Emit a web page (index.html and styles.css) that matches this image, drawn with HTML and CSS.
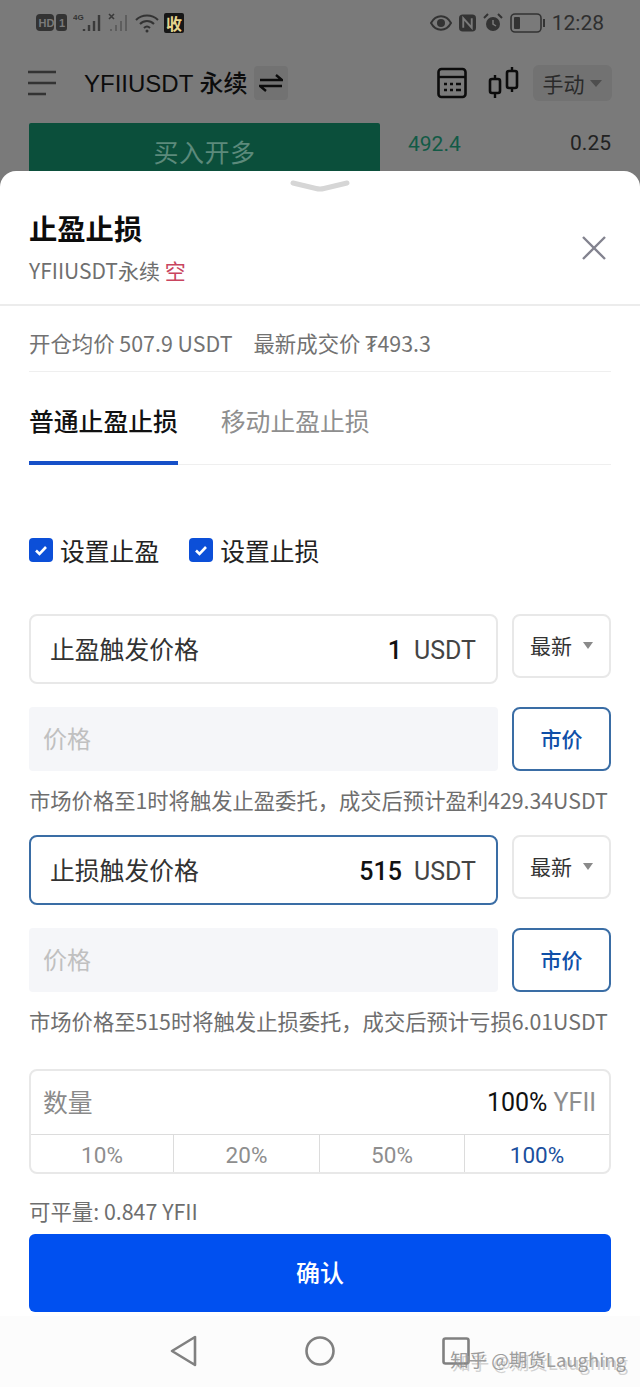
FILE: index.html
```html
<!DOCTYPE html>
<html lang="zh-CN">
<head>
    <meta charset="UTF-8">
    <title>止盈止损</title>
    <link rel="stylesheet" href="styles.css">
</head>
<body>

    <div class="behind">
        <div class="status-bar">
            <div class="status-left">
                <svg width="32" height="18" viewBox="0 0 32 18"><rect x="0" y="0" width="18" height="17" rx="4" fill="#333"/><rect x="20" y="0" width="11" height="17" rx="3" fill="#333"/><text x="2.500" y="13" class="svg-tiny">HD</text><text x="23" y="13" class="svg-tiny">1</text></svg>
                <svg width="30" height="20" viewBox="0 0 30 20"><text x="0" y="7" class="svg-net">4G</text><path d="M11 18v-2M16 18v-6M21 18V8M26 18V2" stroke="#3a3a3a" stroke-width="2.400" fill="none"/></svg>
                <svg width="22" height="20" viewBox="0 0 22 20"><path d="M1 1l5 5M6 1L1 6" stroke="#3a3a3a" stroke-width="1.600"/><path d="M3 18v-2M8 18v-6M13 18V8M18 18V2" stroke="#5e5e5e" stroke-width="2" fill="none"/></svg>
                <svg width="24" height="20" viewBox="0 0 24 20"><path d="M1 7c6-6 16-6 22 0M5 11c4-4 10-4 14 0M9 15c2-2 4-2 6 0" stroke="#333" stroke-width="2" fill="none"/><circle cx="12" cy="18" r="1.500" fill="#333"/></svg>
                <span class="shou">收</span>
            </div>
            <div class="status-right">
                <svg width="22" height="16" viewBox="0 0 22 16"><path d="M1 8c5-9 15-9 20 0-5 9-15 9-20 0z" fill="none" stroke="#333" stroke-width="2"/><circle cx="11" cy="8" r="4" fill="#333"/></svg>
                <svg width="17" height="18" viewBox="0 0 18 18"><rect x="0" y="0" width="18" height="18" rx="4" fill="#333"/><path d="M4.500 14V4l9 10V4" stroke="#7a7a7a" stroke-width="2" fill="none"/></svg>
                <svg width="20" height="20" viewBox="0 0 20 20"><circle cx="10" cy="11" r="7" fill="#333"/><path d="M1 5l4-4M19 5l-4-4" stroke="#333" stroke-width="2" fill="none"/><path d="M10 7v4l3 2" stroke="#7a7a7a" stroke-width="1.500" fill="none"/></svg>
                <svg width="36" height="20" viewBox="0 0 36 20"><rect x="1" y="1" width="30" height="18" rx="4" fill="none" stroke="#333" stroke-width="1.600"/><rect x="4" y="4" width="6" height="12" rx="1" fill="#333"/><rect x="33" y="6" width="2" height="8" fill="#333"/></svg>
                <span class="clock">12:28</span>
            </div>
        </div>

        <div class="top-bar">
            <svg class="menu-icon" width="30" height="26" viewBox="0 0 30 26"><path d="M1 2h28M1 13h28M1 24h18" stroke="#333" stroke-width="2.400"/></svg>
            <span class="pair">YFIIUSDT 永续</span>
            <span class="swap">
                <svg width="24" height="20" viewBox="0 0 24 20"><path d="M1 7h22l-6-5M23 13H1l6 5" stroke="#0c0c0c" stroke-width="2.400" fill="none"/></svg>
            </span>
            <svg class="calc-icon" width="30" height="32" viewBox="0 0 30 32"><rect x="1.500" y="2" width="27" height="28" rx="3" fill="none" stroke="#0c0c0c" stroke-width="2.600"/><path d="M2 10h26" stroke="#0c0c0c" stroke-width="2.400"/><path d="M7 17h3M13 17h3M19 17h5M7 23h3M13 23h3M19 23h5" stroke="#0c0c0c" stroke-width="2.600"/></svg>
            <svg class="candle-icon" width="32" height="34" viewBox="0 0 32 34"><path d="M7 9v4M7 27v5M24 1v4M24 22v4" stroke="#0c0c0c" stroke-width="2.400"/><rect x="2" y="13" width="10" height="14" rx="2" fill="none" stroke="#0c0c0c" stroke-width="2.600"/><rect x="19" y="5" width="10" height="17" rx="2" fill="none" stroke="#0c0c0c" stroke-width="2.600"/></svg>
            <span class="mode">手动<i class="caret mode-caret"></i></span>
        </div>

        <div class="market-row">
            <div class="buy-btn">买入开多</div>
            <span class="bid-price">492.4</span>
            <span class="bid-size">0.25</span>
        </div>
    </div>

    <div class="sheet">
        <svg class="grabber" width="60" height="14" viewBox="0 0 60 14"><path d="M3 3L26 8.500Q30 9.500 34 8.500L57 3" stroke="#d6d6d6" stroke-width="5" stroke-linecap="round" fill="none"/></svg>

        <div class="sheet-head">
            <div>
                <h2>止盈止损</h2>
                <p class="sub">YFIIUSDT永续 <span class="short">空</span></p>
            </div>
            <svg class="close" width="26" height="26" viewBox="0 0 26 26"><path d="M2 2l22 22M24 2L2 24" stroke="#83838f" stroke-width="2.400"/></svg>
        </div>

        <div class="content">
            <div class="info-row">
                <span>开仓均价 507.9 USDT</span>
                <span>最新成交价 ₮493.3</span>
            </div>

            <div class="tabs">
                <span class="tab active">普通止盈止损</span>
                <span class="tab">移动止盈止损</span>
            </div>

            <div class="checks">
                <label class="check"><svg width="24" height="24" viewBox="0 0 24 24"><rect width="24" height="24" rx="4" fill="#0c4fd8"/><path d="M7 12.500l3.500 3.500 6.500-7" stroke="#fff" stroke-width="2.600" fill="none"/></svg>设置止盈</label>
                <label class="check"><svg width="24" height="24" viewBox="0 0 24 24"><rect width="24" height="24" rx="4" fill="#0c4fd8"/><path d="M7 12.500l3.500 3.500 6.500-7" stroke="#fff" stroke-width="2.600" fill="none"/></svg>设置止损</label>
            </div>

            <div class="trigger-row first">
                <div class="trigger"><span class="trigger-label">止盈触发价格</span><span class="trigger-val"><b>1</b>USDT</span></div>
                <div class="select">最新<i class="caret"></i></div>
            </div>
            <div class="price-row">
                <div class="price-input">价格</div>
                <div class="market-btn">市价</div>
            </div>
            <p class="hint">市场价格至1时将触发止盈委托，成交后预计盈利429.34USDT</p>

            <div class="trigger-row">
                <div class="trigger focus"><span class="trigger-label">止损触发价格</span><span class="trigger-val"><b>515</b>USDT</span></div>
                <div class="select">最新<i class="caret"></i></div>
            </div>
            <div class="price-row">
                <div class="price-input">价格</div>
                <div class="market-btn">市价</div>
            </div>
            <p class="hint">市场价格至515时将触发止损委托，成交后预计亏损6.01USDT</p>

            <div class="qty">
                <div class="qty-top"><span class="qty-label">数量</span><span class="qty-val"><b>100%</b> YFII</span></div>
                <div class="qty-steps">
                    <span>10%</span>
                    <span>20%</span>
                    <span>50%</span>
                    <span class="on">100%</span>
                </div>
            </div>

            <p class="avail">可平量: 0.847 YFII</p>
            <div class="confirm">确认</div>
        </div>

        <div class="nav-bar">
            <svg width="28" height="32" viewBox="0 0 28 32"><path d="M25 2v28L2 16z" fill="none" stroke="#808080" stroke-width="2.600" stroke-linejoin="round"/></svg>
            <svg width="30" height="30" viewBox="0 0 30 30"><circle cx="15" cy="15" r="13.500" fill="none" stroke="#808080" stroke-width="2.600"/></svg>
            <svg width="28" height="28" viewBox="0 0 28 28"><rect x="1.500" y="1.500" width="25" height="25" rx="2" fill="none" stroke="#808080" stroke-width="2.600"/></svg>
            <span class="watermark">知乎 @期货Laughing</span>
        </div>
    </div>

</body>
</html>
```

FILE: styles.css
```css
* { box-sizing: border-box; }
html, body { height: 100%; }
body { margin: 0; background-color: #7a7a7a; font-family: "Noto Sans CJK SC", "Noto Sans", Roboto, sans-serif; overflow: hidden; }
p, h2 { margin: 0; }

.behind { height: 171px; overflow: hidden; }
.status-bar { height: 45px; padding: 0 36px; display: flex; align-items: center; justify-content: space-between; }
.status-left, .status-right { display: flex; align-items: center; gap: 5px; }
.status-right { gap: 7px; }
.svg-tiny { font-size: 11px; font-weight: 700; fill: #7a7a7a; font-family: "Liberation Sans", sans-serif; }
.svg-net { font-size: 8px; font-weight: 700; fill: #333; font-family: "Liberation Sans", sans-serif; }
.shou { width: 20px; height: 20px; background-color: #161616; color: #e6d58e; font-size: 16px; line-height: 20px; text-align: center; font-weight: 700; border-radius: 2px; }
.clock { font-size: 21px; color: #2f2f2f; margin-left: -1px; font-family: Roboto, sans-serif; }

.top-bar { height: 76px; padding-left: 27px; display: flex; align-items: center; color: #0c0c0c; }
.menu-icon { margin-right: 27px; }
.pair { font-size: 24px; font-weight: 500; line-height: 30px; margin-top: 1px; font-family: "Liberation Sans", "Noto Sans CJK SC", sans-serif; white-space: nowrap; }
.swap { width: 34px; height: 34px; margin-left: 6px; background-color: #727272; border-radius: 4px; display: flex; align-items: center; justify-content: center; }
.calc-icon { margin-left: 149px; }
.candle-icon { margin-left: 21px; }
.mode { margin-left: 13px; width: 79px; height: 36px; background-color: #727272; border-radius: 6px; font-size: 21px; color: #2a2a2a; display: flex; align-items: center; justify-content: center; gap: 5px; }

.caret { display: inline-block; width: 0; height: 0; border-left: 5px solid transparent; border-right: 5px solid transparent; border-top: 7px solid #8a8a8a; }
.mode-caret { border-top-color: #4e4e4e; border-left-width: 6px; border-right-width: 6px; }

.market-row { padding-left: 29px; padding-top: 1px; display: flex; align-items: flex-start; }
.buy-btn { width: 351px; height: 60px; margin-top: 1px; background-color: #0b4f3b; border-radius: 2px; color: #5c8a7b; font-size: 25px; text-align: center; line-height: 56px; letter-spacing: 0.500px; }
.bid-price { margin-left: 28px; margin-top: 10px; font-size: 21px; color: #125a46; font-family: Roboto, sans-serif; }
.bid-size { margin-left: auto; margin-right: 29px; margin-top: 9px; font-size: 21px; color: #222; font-family: Roboto, sans-serif; }

.sheet { height: 1216px; background-color: #fff; border-radius: 16px 16px 0 0; position: relative; }
.grabber { position: absolute; left: 290px; top: 9px; }

.sheet-head { height: 135px; border-bottom: 2px solid #ececec; padding: 37px 33px 0 29px; display: flex; justify-content: space-between; }
.sheet-head h2 { font-size: 28.300px; line-height: 40px; color: #0c0c0c; font-weight: 700; }
.sub { margin-top: 7px; font-size: 21px; line-height: 30px; color: #6f6f6f; }
.short { color: #c9455f; }
.close { margin-top: 27px; }

.content { padding: 0 29px; }
.info-row { height: 66px; padding-top: 8px; border-bottom: 1px solid #efefef; display: flex; align-items: center; gap: 21px; font-size: 21.400px; color: #727272; white-space: nowrap; }

.tabs { height: 93px; display: flex; gap: 43px; border-bottom: 1px solid #efefef; }
.tab { font-size: 24.800px; line-height: 96px; color: #8e8e8e; height: 93px; white-space: nowrap; }
.tab.active { color: #111; border-bottom: 4px solid #1650c8; font-weight: 500; }

.checks { margin-top: 72px; height: 26px; display: flex; gap: 30px; }
.check { display: flex; align-items: center; gap: 7px; font-size: 24.800px; color: #222; }

.trigger-row { margin-top: 19px; display: flex; align-items: flex-start; justify-content: space-between; }
.trigger-row.first { margin-top: 51px; }
.trigger { width: 469px; height: 70px; border: 2px solid #e8e8e8; border-radius: 8px; padding: 0 20px; display: flex; align-items: center; justify-content: space-between; font-size: 24.800px; color: #333; }
.trigger.focus { border-color: #3a6da5; }
.trigger-label { margin-top: -3px; margin-left: -1px; }
.trigger-val { display: flex; align-items: center; gap: 12px; margin-top: 3px; font-size: 25px; font-family: Roboto, sans-serif; color: #444; }
.trigger-val b { color: #111; font-weight: 500; }
.select { width: 99px; height: 64px; border: 2px solid #e8e8e8; border-radius: 8px; display: flex; align-items: center; justify-content: center; gap: 11px; font-size: 21px; line-height: 28px; padding-bottom: 2px; color: #333; }

.price-row { margin-top: 23px; display: flex; justify-content: space-between; }
.price-input { width: 469px; height: 64px; background-color: #f5f6f9; border-radius: 4px; padding-left: 14px; font-size: 24px; line-height: 62px; color: #c0c0c0; }
.market-btn { width: 99px; height: 64px; border: 2px solid #3a6da5; border-radius: 8px; text-align: center; font-size: 21px; line-height: 59px; font-weight: 500; color: #1050a8; }

.hint { margin-top: 13px; height: 32px; font-size: 21.300px; line-height: 32px; color: #6e6e6e; white-space: nowrap; }

.qty { margin-top: 32px; height: 105px; border: 2px solid #e8e8e8; border-radius: 8px; }
.qty-top { height: 64px; border-bottom: 1px solid #dcdcdc; padding: 0 13px 0 12px; display: flex; align-items: center; justify-content: space-between; font-size: 24.800px; color: #8a8a8a; }
.qty-label { margin-top: -4px; }
.qty-val { font-family: Roboto, sans-serif; font-size: 25px; color: #8e8e8e; }
.qty-val b { color: #111; font-weight: 400; }
.qty-steps { height: 37px; display: grid; grid-template-columns: 142px 146px 145px 1fr; }
.qty-steps span { border-left: 1px solid #dcdcdc; padding-top: 3px; text-align: center; font-size: 22.500px; line-height: 34px; color: #8e8e8e; font-family: Roboto, sans-serif; }
.qty-steps span:first-child { border-left: none; }
.qty-steps .on { color: #1a4f9e; }

.avail { margin-top: 19px; height: 36px; font-size: 21.400px; line-height: 36px; color: #6e6e6e; white-space: nowrap; }
.confirm { margin-top: 5px; height: 78px; background-color: #0050f0; border-radius: 6px; color: #fff; text-align: center; font-size: 24px; font-weight: 500; line-height: 76px; }

.nav-bar { margin-top: 4px; height: 72px; background-color: #fcfcfc; display: flex; align-items: center; justify-content: space-between; padding: 0 170px 3px; position: relative; }
.watermark { position: absolute; right: 14px; top: 30px; font-size: 18.500px; color: #8c8c8c; opacity: 0.850; white-space: nowrap; text-shadow: 2px 3px 0 rgba(170,170,170,0.600); }
```
